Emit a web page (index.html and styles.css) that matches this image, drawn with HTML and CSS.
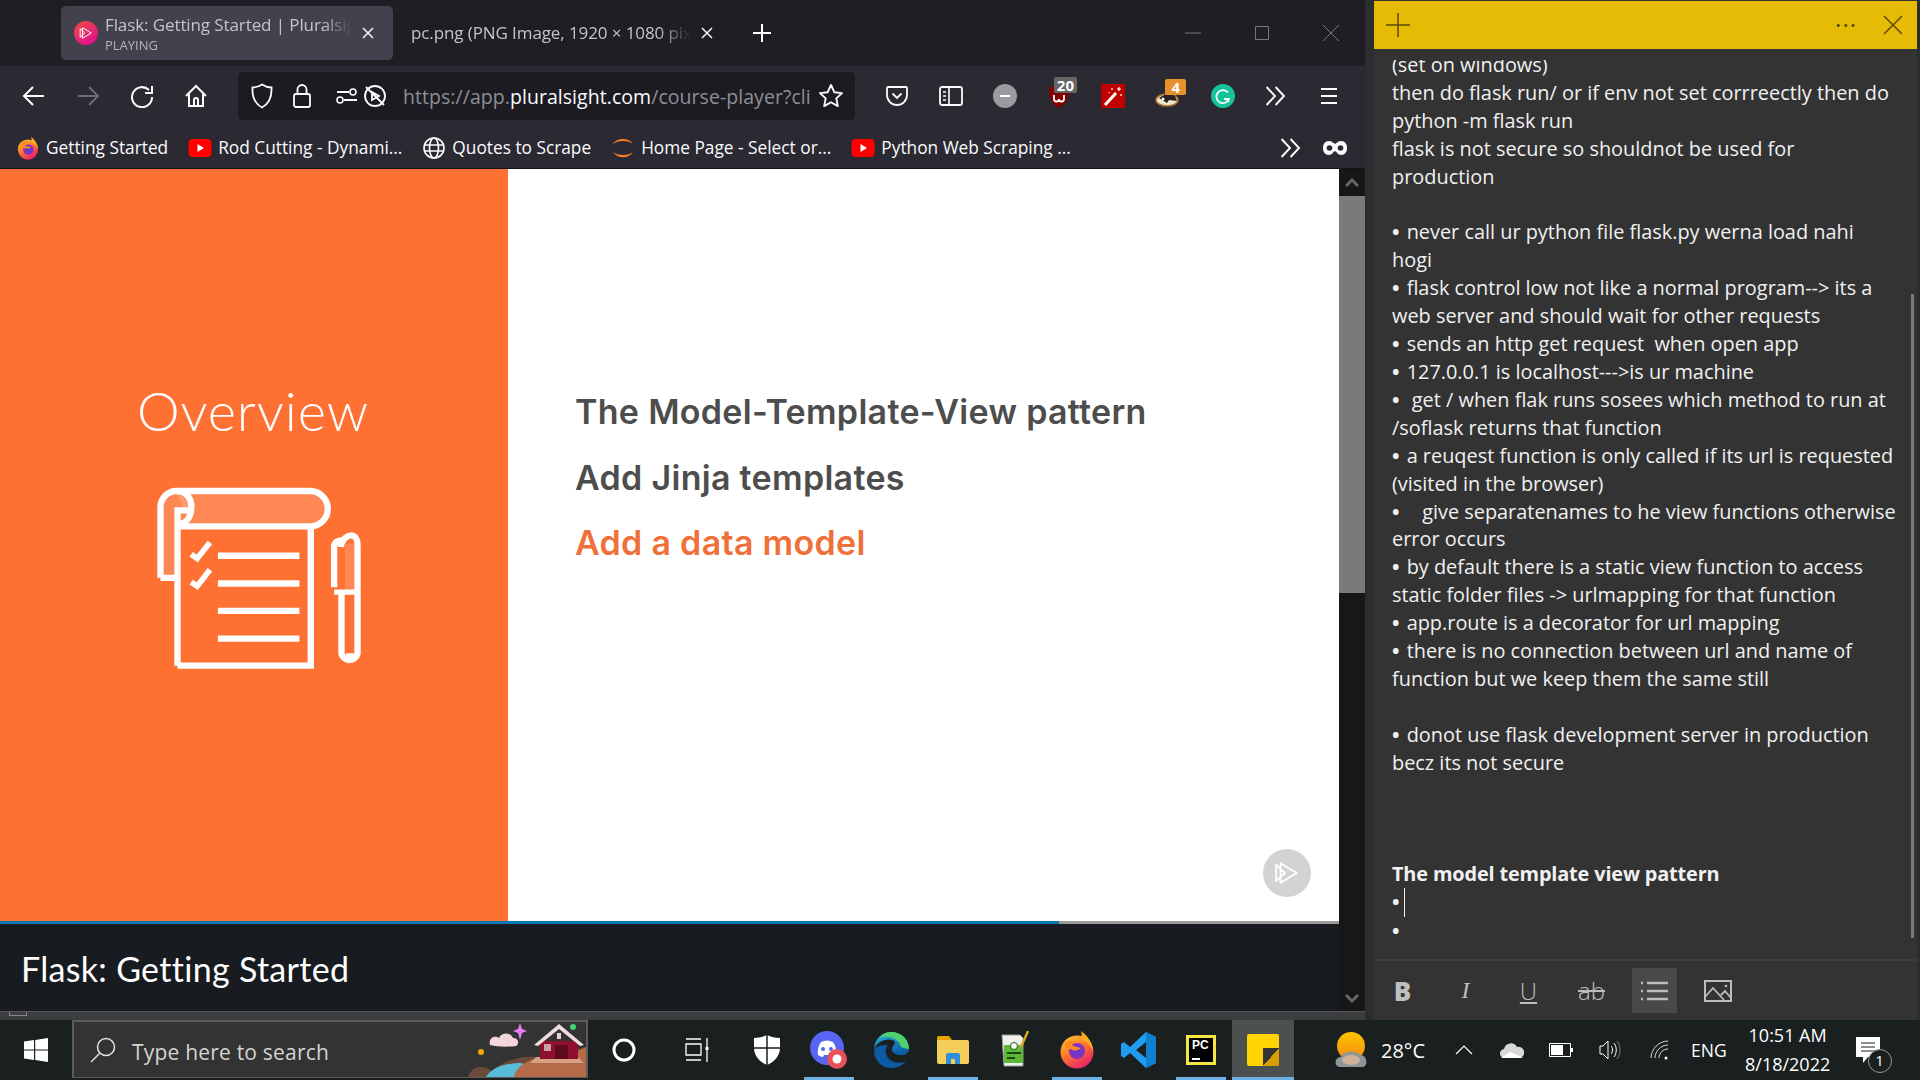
FILE: index.html
```html
<!DOCTYPE html>
<html lang="en">
<head>
  <meta charset="UTF-8">
  <title>Flask: Getting Started | Pluralsight</title>
  <link rel="stylesheet" href="styles.css">
</head>
<body>
  <svg class="defs" width="0" height="0">
    <defs>
      <linearGradient id="foxOuter" x1="0" y1="0" x2="0.6" y2="1">
        <stop offset="0" stop-color="#ffd23a"/><stop offset="0.5" stop-color="#ff7a2a"/><stop offset="1" stop-color="#e8256a"/>
      </linearGradient>
      <radialGradient id="foxInner"><stop offset="0" stop-color="#5a3fd0"/><stop offset="1" stop-color="#8c2fb8"/></radialGradient>
      <linearGradient id="edgeBlue" x1="0" y1="0" x2="0.4" y2="1"><stop offset="0" stop-color="#2fb8d8"/><stop offset="1" stop-color="#0c5fa8"/></linearGradient>
      <linearGradient id="sunFill" x1="0" y1="0" x2="0" y2="1"><stop offset="0" stop-color="#ffc400"/><stop offset="1" stop-color="#f08a10"/></linearGradient>
      <linearGradient id="pinkGrad" x1="0" y1="0" x2="0.6" y2="1"><stop offset="0" stop-color="#f0503c"/><stop offset="1" stop-color="#e0108c"/></linearGradient>
      <symbol id="firefox" viewBox="0 0 32 32">
        <circle cx="16" cy="18" r="13.5" fill="url(#foxOuter)"/>
        <path d="M20 1c5 4 9 9 9 16-3-5-6-8-9-9 1-2 1-5 0-7z" fill="#ffb01f"/>
        <circle cx="16.5" cy="18" r="7" fill="url(#foxInner)"/>
        <path d="M6 10c3-3 7-4 11-2-3 0-5 2-6 4 2 2 7 2 9 3-2 2-5 2-7 1-3 2-7-2-7-6z" fill="#ff8a1f"/>
      </symbol>
      <symbol id="youtube" viewBox="0 0 24 24">
        <rect x="0.5" y="3" width="23" height="18" rx="4" fill="#f00"/>
        <path d="M9.5 8l6.5 4-6.5 4z" fill="#fff"/>
      </symbol>
      <symbol id="chevrons" viewBox="0 0 20 20">
        <path d="M3 2.5l7 7.5-7 7.5M10.5 2.5l7 7.5-7 7.5" fill="none" stroke="currentColor" stroke-width="1.6"/>
      </symbol>
      <symbol id="triangles" viewBox="0 0 24 24">
        <path d="M2 4.5v15l8-7.5zM6 3v18l15-9z" fill="none" stroke="currentColor" stroke-width="1.7" stroke-linejoin="round"/>
      </symbol>
    </defs>
  </svg>

  <div class="desk">
    <div class="browser">
      <div class="tabstrip">
        <div class="tab active">
          <svg class="tab-icon" width="24" height="24" viewBox="0 0 24 24"><circle cx="12" cy="12" r="12" fill="url(#pinkGrad)"/><use href="#triangles" x="5" y="5" width="14" height="14" color="#fff"/></svg>
          <div class="tab-label">
            <div class="tab-title">Flask: Getting Started | Pluralsight</div>
            <div class="tab-sub">PLAYING</div>
          </div>
          <svg class="tab-close" width="12" height="12" viewBox="0 0 12 12"><path d="M1 1l10 10M11 1L1 11" stroke="#f4f4f4" stroke-width="1.5"/></svg>
        </div>
        <div class="tab">
          <div class="tab-label">
            <div class="tab-title">pc.png (PNG Image, 1920 × 1080 pixels)</div>
          </div>
          <svg class="tab-close" width="12" height="12" viewBox="0 0 12 12"><path d="M1 1l10 10M11 1L1 11" stroke="#f4f4f4" stroke-width="1.5"/></svg>
        </div>
        <svg class="new-tab" width="18" height="18" viewBox="0 0 18 18"><path d="M9 0v18M0 9h18" stroke="#fff" stroke-width="2"/></svg>
        <div class="win-controls">
          <svg width="16" height="16" viewBox="0 0 16 16"><path d="M0 8h16" stroke="#777"/></svg>
          <svg width="16" height="16" viewBox="0 0 16 16"><path d="M1.5 1.5h13v13h-13z" fill="none" stroke="#777"/></svg>
          <svg width="16" height="16" viewBox="0 0 16 16"><path d="M0 0l16 16M16 0L0 16" stroke="#777"/></svg>
        </div>
      </div>

      <div class="toolbar">
        <svg class="tool" width="24" height="24" viewBox="0 0 24 24"><path d="M22 12H2M11 3l-9 9 9 9" fill="none" stroke="#fbfbfe" stroke-width="2"/></svg>
        <svg class="tool" width="24" height="24" viewBox="0 0 24 24"><path d="M2 12h20M13 3l9 9-9 9" fill="none" stroke="#6d6c73" stroke-width="2"/></svg>
        <svg class="tool" width="24" height="24" viewBox="0 0 24 24"><path d="M19 6a10 10 0 1 0 3 7" fill="none" stroke="#fbfbfe" stroke-width="2"/><path d="M22 2v7h-7" fill="none" stroke="#fbfbfe" stroke-width="2"/></svg>
        <svg class="tool" width="24" height="24" viewBox="0 0 24 24"><path d="M2 12L12 2l10 10M5 10v12h14V10M10 22v-6a2 2 0 0 1 4 0v6" fill="none" stroke="#fbfbfe" stroke-width="2"/></svg>
        <div class="urlbar">
          <svg width="24" height="26" viewBox="0 0 24 26"><path d="M12 1.5c3 2 6 3 9.500 3 .5 9-2 16-9.500 20C4.500 20.500 2 13.500 2.500 4.500c3.500 0 6.500-1 9.500-3z" fill="none" stroke="#fbfbfe" stroke-width="1.800"/></svg>
          <svg class="lock" width="20" height="26" viewBox="0 0 20 26"><rect x="2" y="11" width="16" height="13" rx="2" fill="none" stroke="#fbfbfe" stroke-width="1.800"/><path d="M5.500 11V6.500a4.500 4.500 0 0 1 9 0V11" fill="none" stroke="#fbfbfe" stroke-width="1.800"/></svg>
          <svg class="perm" width="22" height="20" viewBox="0 0 22 20"><path d="M1 6h12M8 14h13" stroke="#fbfbfe" stroke-width="1.800"/><circle cx="17" cy="6" r="3" fill="none" stroke="#fbfbfe" stroke-width="1.600"/><circle cx="4" cy="14" r="3" fill="none" stroke="#fbfbfe" stroke-width="1.600"/></svg>
          <svg width="24" height="24" viewBox="0 0 24 24"><circle cx="12" cy="12" r="10" fill="none" stroke="#fbfbfe" stroke-width="1.800"/><path d="M9 8v8l7-4zM3 3l18 18" fill="none" stroke="#fbfbfe" stroke-width="1.800"/></svg>
          <div class="url"><span class="dim">https://app.</span>pluralsight.com<span class="dim">/course-player?cli</span></div>
          <svg class="star" width="26" height="26" viewBox="0 0 26 26"><path d="M13 2l3.300 7.200 7.700.9-5.700 5.300 1.500 7.700-6.800-3.900-6.800 3.900 1.500-7.700L2 10.100l7.700-.9z" fill="none" stroke="#fbfbfe" stroke-width="1.900" stroke-linejoin="round"/></svg>
        </div>
        <div class="ext-row">
          <svg width="24" height="24" viewBox="0 0 24 24"><path d="M3 3h18a1 1 0 0 1 1 1v7a10 10 0 0 1-20 0V4a1 1 0 0 1 1-1z" fill="none" stroke="#fbfbfe" stroke-width="1.800"/><path d="M7.500 9.500L12 14l4.500-4.500" fill="none" stroke="#fbfbfe" stroke-width="1.800"/></svg>
          <svg width="24" height="24" viewBox="0 0 24 24"><rect x="1" y="3" width="22" height="18" rx="2" fill="none" stroke="#fbfbfe" stroke-width="1.800"/><path d="M10 3v18M4 8h3M4 12h3M4 16h3" fill="none" stroke="#fbfbfe" stroke-width="1.600"/></svg>
          <svg width="24" height="24" viewBox="0 0 24 24"><circle cx="12" cy="12" r="12" fill="#9a9aa0"/><path d="M7 12h10" stroke="#fff" stroke-width="2"/></svg>
          <div class="ext">
            <svg width="24" height="26" viewBox="0 0 24 26"><path d="M12 1c3 2 6 3 10 3 .5 10-2 17-10 21C4 21 1.500 14 2 4c4 0 7-1 10-3z" fill="#800000"/><path d="M7 12v4a2 2 0 0 0 5 0 2 2 0 0 0 5 0v-4" fill="none" stroke="#fff" stroke-width="1.800"/></svg>
            <span class="badge badge-gray">20</span>
          </div>
          <svg width="24" height="24" viewBox="0 0 24 24"><rect width="24" height="24" fill="#c00000"/><path d="M4 21L15 9" stroke="#fff" stroke-width="3"/><path d="M18 3v4M16 5h4M20 10v2M11 4v2M8 8v1" stroke="#fff" stroke-width="1.200"/></svg>
          <div class="ext">
            <svg width="26" height="24" viewBox="0 0 26 24"><ellipse cx="12" cy="16" rx="11" ry="6" fill="#f2e6d0" stroke="#a8702a" stroke-width="1.500"/><path d="M4 14c5-4 10-5 16-2l2 5-8-1-2 3z" fill="#2a2520"/><circle cx="8" cy="15" r="1.500" fill="#fff"/></svg>
            <span class="badge badge-orange">4</span>
          </div>
          <svg width="24" height="24" viewBox="0 0 24 24"><circle cx="12" cy="12" r="12" fill="#15c39a"/><path d="M17 8.500a6.500 6.500 0 1 0 1 6.500h-5" fill="none" stroke="#fff" stroke-width="1.800"/><path d="M15.500 15l2.500 3" stroke="#fff" stroke-width="1.800"/></svg>
          <svg class="chev" width="24" height="24" color="#fbfbfe"><use href="#chevrons"/></svg>
          <svg width="24" height="24" viewBox="0 0 24 24"><path d="M4 5h16M4 12h16M4 19h16" stroke="#fbfbfe" stroke-width="2"/></svg>
        </div>
      </div>

      <div class="bookmarks">
        <div class="bm"><svg width="24" height="24"><use href="#firefox"/></svg><span>Getting Started</span></div>
        <div class="bm"><svg width="24" height="24"><use href="#youtube"/></svg><span>Rod Cutting - Dynami...</span></div>
        <div class="bm"><svg width="24" height="24" viewBox="0 0 24 24"><circle cx="12" cy="12" r="10" fill="none" stroke="#fbfbfe" stroke-width="1.600"/><ellipse cx="12" cy="12" rx="4.500" ry="10" fill="none" stroke="#fbfbfe" stroke-width="1.600"/><path d="M2 9h20M2 15h20" stroke="#fbfbfe" stroke-width="1.600"/></svg><span>Quotes to Scrape</span></div>
        <div class="bm"><svg width="24" height="28" viewBox="0 0 24 28"><path d="M2 10C5 4 18 3 22 10C18 6 6 6 2 10zM2 18c4 7 16 7 20 0-4 4-16 4-20 0z" fill="#f58025"/></svg><span>Home Page - Select or...</span></div>
        <div class="bm"><svg width="24" height="24"><use href="#youtube"/></svg><span>Python Web Scraping ...</span></div>
        <svg class="bm-more" width="24" height="24" color="#fbfbfe"><use href="#chevrons"/></svg>
        <svg class="bm-mask" width="26" height="18" viewBox="0 0 26 18"><path d="M7 2c3 0 4 2 6 3 2-1 3-3 6-3 4 0 6 3 6 7s-2 7-6 7c-3 0-4-3-6-4-2 1-3 4-6 4-4 0-6-3-6-7s2-7 6-7z" fill="#fbfbfe"/><circle cx="7.500" cy="9" r="2.800" fill="#2b2a33"/><circle cx="18.500" cy="9" r="2.800" fill="#2b2a33"/></svg>
      </div>

      <div class="viewport">
        <div class="page">
          <div class="slide">
            <div class="slide-side">
              <div class="slide-heading">Overview</div>
              <svg class="slide-icon" width="204" height="182" viewBox="170 350 610 545">
                <g fill="none" stroke="#fff" stroke-width="19">
                  <path d="M275 468H628A54 54 0 0 0 628 362H225" fill="rgba(255,255,255,.16)" stroke="none"/>
                  <path d="M180 622V410A48 48 0 0 1 228 362H628A53 53 0 0 1 628 468H240" />
                  <path d="M180 622V410A48 48 0 0 1 228 362C262 362 275 390 272 415C270 440 258 460 235 462V622Z" fill="rgba(255,255,255,.16)" stroke="none"/>
                  <path d="M228 362C262 362 275 390 272 415C270 440 258 460 235 462"/>
                  <path d="M180 622H230M231 885V420H262M231 885H630V468"/>
                  <path d="M352 556H596M352 639H596M352 721H596M352 804H596"/>
                  <path d="M272 552L290 564L328 516M272 635L290 647L328 598" stroke-width="17"/>
                  <path d="M700 650V530C700 515 712 510 722 510" />
                  <path d="M720 530C722 505 742 495 750 495C762 495 770 505 770 522V850A25 25 0 0 1 722 850V665" />
                  <path d="M732 520H760V660H732Z" fill="rgba(255,255,255,.16)" stroke="none"/>
                  <path d="M700 665H770M735 856H760" stroke-width="16"/>
                </g>
              </svg>
            </div>
            <ul class="slide-list">
              <li>The Model-Template-View pattern</li>
              <li>Add Jinja templates</li>
              <li class="current">Add a data model</li>
            </ul>
            <div class="play-btn"><svg width="26" height="26" color="#fff"><use href="#triangles"/></svg></div>
          </div>
          <div class="progress"><div class="progress-done"></div></div>
          <div class="course-title">Flask: Getting Started</div>
        </div>
        <div class="page-scroll">
          <div class="arrow"><svg width="14" height="10" viewBox="0 0 14 10"><path d="M1 8l6-6 6 6" fill="none" stroke="#666" stroke-width="3"/></svg></div>
          <div class="thumb"></div>
          <div class="track"></div>
          <div class="arrow"><svg width="14" height="10" viewBox="0 0 14 10"><path d="M1 2l6 6 6-6" fill="none" stroke="#666" stroke-width="3"/></svg></div>
        </div>
      </div>
      <div class="behind"><div class="behind-mark"></div></div>
    </div>

    <div class="note">
      <div class="note-head">
        <svg width="24" height="24" viewBox="0 0 24 24"><path d="M12 0v24M0 12h24" stroke="#5c4a00" stroke-width="1.500"/></svg>
        <div class="note-dots">···</div>
        <svg width="20" height="20" viewBox="0 0 20 20"><path d="M1 1l18 18M19 1L1 19" stroke="#5c4a00" stroke-width="1.500"/></svg>
      </div>
      <div class="note-body">
        <div class="note-text">
          <div>(set on windows)</div>
          <div>then do flask run/ or if env not set corrreectly then do</div>
          <div>python -m flask run</div>
          <div>flask is not secure so shouldnot be used for</div>
          <div>production</div>
          <div>&nbsp;</div>
          <div><b class="dot">•</b> never call ur python file flask.py werna load nahi</div>
          <div>hogi</div>
          <div><b class="dot">•</b> flask control low not like a normal program--&gt; its a</div>
          <div>web server and should wait for other requests</div>
          <div><b class="dot">•</b> sends an http get request  when open app</div>
          <div><b class="dot">•</b> 127.0.0.1 is localhost---&gt;is ur machine</div>
          <div><b class="dot">•</b>  get / when flak runs sosees which method to run at</div>
          <div>/soflask returns that function</div>
          <div><b class="dot">•</b> a reuqest function is only called if its url is requested</div>
          <div>(visited in the browser)</div>
          <div><b class="dot">•</b>    give separatenames to he view functions otherwise</div>
          <div>error occurs</div>
          <div><b class="dot">•</b> by default there is a static view function to access</div>
          <div>static folder files -&gt; urlmapping for that function</div>
          <div><b class="dot">•</b> app.route is a decorator for url mapping</div>
          <div><b class="dot">•</b> there is no connection between url and name of</div>
          <div>function but we keep them the same still</div>
          <div>&nbsp;</div>
          <div><b class="dot">•</b> donot use flask development server in production</div>
          <div>becz its not secure</div>
          <div>&nbsp;</div>
          <div>&nbsp;</div>
          <div>&nbsp;</div>
          <div class="note-bold">The model template view pattern</div>
          <div><b class="dot">•</b><span class="caret"></span></div>
          <div><b class="dot">•</b></div>
        </div>
        <div class="note-scroll"></div>
      </div>
      <div class="note-tools">
        <div class="fmt fmt-b">B</div>
        <div class="fmt fmt-i">I</div>
        <div class="fmt fmt-u">U</div>
        <div class="fmt fmt-s">ab</div>
        <div class="fmt fmt-on"><svg width="28" height="20" viewBox="0 0 28 20"><path d="M6 2h21M6 10h21M6 18h21" stroke="#bdbdbd" stroke-width="2.400"/><path d="M0 2h3M0 10h3M0 18h3" stroke="#bdbdbd" stroke-width="2.400" stroke-dasharray="2 1"/></svg></div>
        <div class="fmt"><svg width="28" height="22" viewBox="0 0 28 22"><path d="M1 1h26v20H1z" fill="none" stroke="#bdbdbd" stroke-width="2"/><path d="M1 17l8-9 11 12M17 15l4-4 6 7" fill="none" stroke="#bdbdbd" stroke-width="1.800"/><circle cx="22" cy="6" r="1.300" fill="#bdbdbd"/></svg></div>
      </div>
    </div>
  </div>

  <div class="taskbar">
    <div class="start">
      <svg width="24" height="24" viewBox="0 0 24 24"><path d="M0 3.500l10-1.400V11.400H0zM11.200 1.900L24 0V11.400H11.200zM0 12.600h10v9.400L0 20.500zM11.200 12.600H24V24l-12.800-1.900z" fill="#fff"/></svg>
    </div>
    <div class="search">
      <svg width="26" height="26" viewBox="0 0 26 26"><circle cx="16" cy="10" r="8.500" fill="none" stroke="#e4e4e4" stroke-width="1.500"/><path d="M10 16L1 25" stroke="#e4e4e4" stroke-width="1.500"/></svg>
      <span class="search-text">Type here to search</span>
      <svg class="search-art" width="118" height="54" viewBox="0 0 118 54">
        <path d="M0 54c4-12 16-12 24-6 8-8 26-16 46-14l48-10v30z" fill="#6a4a3a"/>
        <path d="M18 54c6-10 20-14 36-14l10 14z" fill="#58bcd8"/>
        <path d="M46 54c2-10 14-18 28-20 16-2 30-2 44-10v30z" fill="#b56a48"/>
        <path d="M62 40h54l-6-6H68z" fill="#d8a184"/>
        <path d="M72 36V18h38v18z" fill="#8f1030"/>
        <path d="M66 22L91 1l25 21-4 1-21-17-21 17z" fill="#f0dcdc"/>
        <rect x="87" y="22" width="13" height="14" fill="#5c0a1c"/>
        <rect x="76" y="21" width="7" height="7" fill="#c9a0a8"/>
        <rect x="89" y="10" width="4" height="6" fill="#e8cfd3"/>
        <path d="M22 22c-2-8 6-10 9-7 2-6 12-6 14 0 5-1 7 6 3 8-8 1-18 1-26-1z" fill="#f2d6da"/>
        <path d="M52 0l2 6 5 2-5 2-2 7-2-7-5-2 5-2z" fill="#e87cf5"/>
        <circle cx="13" cy="29" r="3" fill="#f5a800"/>
        <circle cx="105" cy="4" r="3" fill="#3ed474"/>
      </svg>
    </div>
    <div class="tb-slot tb-cortana"><svg width="24" height="24" viewBox="0 0 24 24"><circle cx="12" cy="12" r="10" fill="none" stroke="#fff" stroke-width="3"/></svg></div>
    <div class="tb-slot tb-tasks"><svg width="24" height="24" viewBox="0 0 24 24"><path d="M1 1h15M1 6h15v11H1zM1 22h15" fill="none" stroke="#fff" stroke-width="1.300"/><path d="M22 0v24" stroke="#fff" stroke-width="1.300"/><rect x="20.500" y="9" width="3" height="3" fill="#fff"/></svg></div>
    <div class="tb-slot"><svg width="26" height="30" viewBox="0 0 26 30"><path d="M13 0c4 2 8 3 13 3v10c0 8-6 14-13 17C6 27 0 21 0 13V3c5 0 9-1 13-3z" fill="#fff"/><path d="M13 0v30M0 13h26" stroke="#1a1f1f" stroke-width="1.500"/></svg></div>
    <div class="tb-slot on"><svg width="38" height="38" viewBox="0 0 38 38"><circle cx="17" cy="17" r="17" fill="#5865f2"/><path d="M8 24c-1-5 1-10 3-13 4-2 8-2 12 0 2 3 4 8 3 13-2 1-3 2-5 2l-1-2h-6l-1 2c-2 0-3-1-5-2z" fill="#fff"/><circle cx="13" cy="18" r="2" fill="#5865f2"/><circle cx="21" cy="18" r="2" fill="#5865f2"/><circle cx="27" cy="28" r="10" fill="#e8505b"/><circle cx="27" cy="28" r="4.500" fill="#fff"/></svg></div>
    <div class="tb-slot"><svg width="36" height="36" viewBox="0 0 36 36"><path d="M1 18C1 7 9 0 18 0c10 0 18 7 18 17 0 4-4 6-8 6-5 0-9-2-9-6 0-3 3-4 3-7C20 6 5 6 1 18z" fill="url(#edgeBlue)"/><path d="M36 17c0-10-8-17-18-17-5 0-9 2-12 6 8-4 20 0 22 9 3 1 6 2 8 2z" fill="#4fd06a"/><path d="M1 18c0 10 7 18 17 18 6 0 11-2 15-7-6 3-14 2-18-3-3-5-3-9 0-13C8 13 3 14 1 18z" fill="#0c59a4"/></svg></div>
    <div class="tb-slot on"><svg width="32" height="28" viewBox="0 0 32 28"><path d="M0 2a2 2 0 0 1 2-2h10l3 4H0z" fill="#e8a400"/><path d="M0 4h30a2 2 0 0 1 2 2v20a2 2 0 0 1-2 2H2a2 2 0 0 1-2-2z" fill="#f6cf5b"/><path d="M9 28V19a2 2 0 0 1 2-2h10a2 2 0 0 1 2 2v9h-5v-5h-4v5z" fill="#2f8fd8"/></svg></div>
    <div class="tb-slot"><svg width="28" height="38" viewBox="0 0 28 38"><path d="M1 4h18l3 3v28H3z" fill="#eef2ea" stroke="#9a9a9a"/><path d="M3 14h19v18H3z" fill="#5fb73a"/><circle cx="13" cy="15" r="3.500" fill="#fff" stroke="#1f5a10"/><path d="M6 22h14M6 27h8" stroke="#174a0c" stroke-width="2"/><path d="M27 0L20 16" stroke="#e0a420" stroke-width="2.400"/></svg></div>
    <div class="tb-slot on"><svg width="36" height="38" viewBox="0 0 36 38"><circle cx="18" cy="21" r="16.500" fill="url(#foxOuter)"/><path d="M22 0c7 5 12 12 12 20-3-6-8-11-13-12 2-3 2-5 1-8z" fill="#ffab1f"/><circle cx="18" cy="20" r="8" fill="url(#foxInner)"/><path d="M6 12c4-3 8-3 12-2-3 1-5 3-5 4 3 2 7 2 9 3-3 3-8 3-10 1-3 1-6-2-6-6z" fill="#ff8a1f"/></svg></div>
    <div class="tb-slot"><svg width="36" height="36" viewBox="0 0 36 36"><path d="M25 0l10 5v26l-10 5-16-15-6 5-3-2V12l3-2 6 5zM25 10L15 18l10 8z" fill="#1f9cf0"/><path d="M25 0l10 5v26l-10 5z" fill="#0f7fd0"/></svg></div>
    <div class="tb-slot on"><div class="pycharm"><div class="pc-inner">PC<i></i></div></div></div>
    <div class="tb-slot tb-sticky on"><div class="sticky"><i></i></div></div>

    <div class="tray">
      <svg class="tray-weather" width="32" height="36" viewBox="0 0 32 36"><circle cx="16" cy="14" r="14" fill="url(#sunFill)"/><path d="M5 35c-6 0-6-10 1-10 2-6 15-7 19-2 7-1 9 12 2 12z" fill="#8c9598"/><ellipse cx="16" cy="28" rx="9" ry="5" fill="#d0b09a"/></svg>
      <span class="temp">28°C</span>
      <svg class="tray-caret" width="18" height="10" viewBox="0 0 18 10"><path d="M1 9l8-8 8 8" fill="none" stroke="#fff" stroke-width="1.200"/></svg>
      <svg class="tray-cloud" width="24" height="18" viewBox="0 0 24 18"><path d="M5 17a4.500 4.500 0 0 1-1-9 7 7 0 0 1 13-2 5.500 5.500 0 0 1 3 11z" fill="#d8d8d8"/><path d="M1 17l9-6 5 2 8 4z" fill="#fff"/></svg>
      <svg class="tray-batt" width="24" height="14" viewBox="0 0 24 14"><path d="M.5.5h21v13H.5z" fill="none" stroke="#fff"/><rect x="2" y="2" width="12" height="10" fill="#fff"/><rect x="22" y="5" width="2" height="4" fill="#fff"/></svg>
      <svg class="tray-sound" width="22" height="20" viewBox="0 0 22 20"><path d="M1 6h3l5-5v18l-5-5H1z" fill="none" stroke="#fff"/><path d="M12 6c2 2 2 6 0 8M15 3c3 4 3 10 0 14" fill="none" stroke="#fff"/><path d="M18 1c4 5 4 13 0 18" fill="none" stroke="#777"/></svg>
      <svg class="tray-wifi" width="20" height="20" viewBox="0 0 20 20"><path d="M1 18C1 9 9 1 18 1M5 18c0-7 6-13 13-13M9 18c0-5 4-9 9-9" fill="none" stroke="#ddd"/><circle cx="16" cy="18" r="1.500" fill="#fff"/></svg>
      <span class="lang">ENG</span>
      <div class="clock"><div>10:51 AM</div><div>8/18/2022</div></div>
      <div class="notify">
        <svg width="24" height="26" viewBox="0 0 24 26"><path d="M0 0h24v20H12l-5 6v-6H0z" fill="#fff"/><path d="M5 6h14M5 10h14M5 14h14" stroke="#1a1f1f"/></svg>
        <span class="notify-count">1</span>
      </div>
    </div>
  </div>
</body>
</html>
```
FILE: styles.css
```css
* {
  box-sizing: border-box;
}
body {
  margin: 0;
  width: 1920px;
  height: 1080px;
  overflow: hidden;
  background-color: #2b2d2e;
  font-family: "Open Sans", "Liberation Sans", sans-serif;
  color: #fbfbfe;
}
svg {
  display: block;
  flex: none;
}
.defs {
  position: absolute;
}
.desk {
  display: flex;
  height: 1020px;
}

/* browser window */
.browser {
  width: 1365px;
  display: flex;
  flex-direction: column;
}
.tabstrip {
  height: 66px;
  background-color: #1f1e25;
  display: flex;
  align-items: center;
  padding-left: 61px;
}
.tab {
  width: 332px;
  height: 54px;
  display: flex;
  align-items: center;
  border-radius: 5px;
  padding: 0 19px 0 13px;
}
.tab.active {
  background-color: #42414d;
}
.tab + .tab {
  width: 332px;
  padding-left: 18px;
  padding-right: 0;
}
.tab-icon {
  margin-right: 7px;
}
.tab-label {
  min-width: 0;
  overflow: hidden;
  white-space: nowrap;
  -webkit-mask-image: linear-gradient(to right, #000 88%, transparent);
  mask-image: linear-gradient(to right, #000 88%, transparent);
}
.tab.active .tab-label {
  width: 254px;
}
.tab + .tab .tab-label {
  width: 280px;
}
.tab-title {
  font-size: 17px;
  line-height: 24px;
  color: #c4c4ca;
  letter-spacing: -0.1px;
}
.tab-sub {
  font-size: 13px;
  line-height: 17px;
  color: #b4b4ba;
}
.tab-close {
  margin-left: 10px;
}
.new-tab {
  margin-left: 28px;
}
.win-controls {
  margin-left: auto;
  display: flex;
  gap: 53px;
  padding-right: 26px;
}
.toolbar {
  height: 58px;
  background-color: #2b2a33;
  display: flex;
  align-items: center;
  padding: 1px 0 0 22px;
}
.tool {
  margin-right: 30px;
}
.urlbar {
  width: 617px;
  height: 48px;
  background-color: #1c1b22;
  border-radius: 5px;
  display: flex;
  align-items: center;
  padding-left: 12px;
  gap: 12px;
}
.lock {
  margin-left: 6px;
}
.perm {
  margin-left: 12px;
  margin-right: -7px;
}
.url {
  font-size: 19.5px;
  white-space: nowrap;
  width: 408px;
  overflow: hidden;
  margin: 2px 0 0 4px;
  letter-spacing: 0.05px;
  color: #fbfbfe;
}
.url .dim {
  color: #8f8f96;
}
.star {
  margin-left: -5px;
}
.ext-row {
  display: flex;
  align-items: center;
  gap: 30px;
  margin-left: 30px;
}
.ext {
  position: relative;
}
.badge {
  position: absolute;
  top: -6px;
  right: -6px;
  height: 16px;
  font-size: 15px;
  line-height: 16px;
  font-weight: 700;
  color: #fff;
  padding: 0 3px;
  border-radius: 2px;
}
.badge-gray {
  background-color: #666;
}
.badge-orange {
  background-color: #e8902a;
  top: -5px;
  right: -5px;
  padding: 0 6px;
}
.chev {
  margin-left: -2px;
}
.bookmarks {
  height: 45px;
  background-color: #2b2a33;
  border-bottom: 1px solid #111;
  display: flex;
  align-items: center;
  padding: 3px 0 0 16px;
  gap: 20px;
}
.bm {
  display: flex;
  align-items: center;
  gap: 6px;
  font-size: 17.3px;
  white-space: nowrap;
}
.bm-more {
  margin-left: auto;
}
.bm-mask {
  margin-right: 17px;
}

/* page */
.viewport {
  flex: 1;
  display: flex;
  min-height: 0;
}
.page {
  width: 1339px;
  display: flex;
  flex-direction: column;
}
.slide {
  height: 752px;
  display: flex;
  position: relative;
  background-color: #fff;
}
.slide-side {
  width: 508px;
  background-color: #ff7033;
  padding: 212px 0 0 0;
}
.slide-heading {
  font-family: Lato, sans-serif;
  font-weight: 300;
  font-size: 54px;
  line-height: 60px;
  letter-spacing: 0.9px;
  color: #fff;
  margin-left: 137px;
}
.slide-icon {
  margin: 46px 0 0 157px;
}
.slide-list {
  list-style: none;
  margin: 0;
  padding: 210px 0 0 67px;
  font-family: Inter, sans-serif;
  font-weight: 600;
  font-size: 34px;
  line-height: 65.5px;
  letter-spacing: 0.3px;
  color: #4d4d4d;
  white-space: nowrap;
}
.slide-list .current {
  color: #f0703a;
}
.play-btn {
  position: absolute;
  right: 28px;
  bottom: 24px;
  width: 48px;
  height: 48px;
  border-radius: 50%;
  background-color: #d3d3d3;
  display: flex;
  align-items: center;
  justify-content: center;
}
.progress {
  height: 3px;
  background-color: #9a9a9a;
}
.progress-done {
  width: 1059px;
  height: 3px;
  background-color: #0a78b0;
}
.course-title {
  flex: 1;
  background-color: #181b20;
  font-family: Lato, sans-serif;
  font-size: 34px;
  letter-spacing: 0.3px;
  padding: 24px 0 0 21px;
  color: #fff;
}
.page-scroll {
  width: 26px;
  display: flex;
  flex-direction: column;
  background-color: #171717;
}
.page-scroll .arrow {
  height: 27px;
  display: flex;
  align-items: center;
  justify-content: center;
}
.page-scroll .thumb {
  height: 397px;
  background-color: #7a7a7a;
}
.page-scroll .track {
  flex: 1;
}
.behind {
  height: 9px;
  background-color: #3c3d3e;
  border-top: 1px solid #555;
  padding-left: 9px;
}
.behind-mark {
  width: 18px;
  height: 4px;
  border: 1px solid #888;
  border-top: 0;
}

/* sticky note */
.note {
  width: 543px;
  margin-left: 9px;
  padding-top: 1px;
  background-color: #333;
  display: flex;
  flex-direction: column;
}
.note-head {
  height: 48px;
  background-color: #e5bb05;
  display: flex;
  align-items: center;
  padding: 0 14px 0 12px;
}
.note-dots {
  margin-left: auto;
  margin-right: 26px;
  font-size: 24px;
  line-height: 24px;
  color: #5c4a00;
  letter-spacing: 1px;
}
.note-body {
  flex: 1;
  min-height: 0;
  margin-top: 11px;
  overflow: hidden;
  position: relative;
  border-bottom: 2px solid #3e3e3e;
}
.note-text {
  margin-top: -9px;
  padding-left: 18px;
  font-size: 19.9px;
  line-height: 27.9px;
  color: #f1f1f1;
}
.note-text div {
  white-space: pre;
}
.note-text .dot {
  font-weight: 700;
  margin-right: 2px;
}
.note-bold {
  font-weight: 700;
  letter-spacing: -0.15px;
}
.caret {
  display: inline-block;
  width: 1px;
  height: 29px;
  margin-left: 3px;
  vertical-align: -8px;
  background-color: #eee;
}
.note-scroll {
  position: absolute;
  right: 3px;
  top: 234px;
  bottom: 21px;
  width: 3px;
  background-color: #7a7a7a;
}
.note-tools {
  height: 59px;
  display: flex;
  padding: 7px 0 0 6px;
  gap: 18px;
}
.fmt {
  width: 45px;
  height: 45px;
  display: flex;
  align-items: center;
  justify-content: center;
  font-size: 24px;
  color: #bdbdbd;
}
.fmt-b {
  font-weight: 800;
  font-size: 26px;
}
.fmt-i {
  font-family: "Liberation Serif", serif;
  font-style: italic;
}
.fmt-u {
  text-decoration: underline;
  font-weight: 300;
}
.fmt-s {
  text-decoration: line-through;
  font-weight: 300;
}
.fmt-on {
  background-color: #494949;
}

/* taskbar */
.taskbar {
  height: 60px;
  background-color: #1a1f1f;
  display: flex;
  align-items: stretch;
}
.start {
  width: 72px;
  display: flex;
  align-items: center;
  justify-content: center;
}
.search {
  width: 516px;
  height: 58px;
  background-color: #333;
  border: 2px solid #5c5c5c;
  border-bottom-width: 1px;
  display: flex;
  align-items: center;
  padding-left: 16px;
  position: relative;
  overflow: hidden;
}
.search-text {
  margin: 4px 0 0 16px;
  font-size: 21px;
  color: #d4d4d4;
  letter-spacing: 0.2px;
}
.search-art {
  position: absolute;
  right: 0;
  bottom: 0;
}
.tb-slot {
  width: 62px;
  display: flex;
  align-items: center;
  justify-content: center;
  position: relative;
}
.tb-cortana {
  margin-left: 5px;
  margin-right: 11px;
}
.tb-tasks {
  margin-right: 8px;
}
.tb-slot.on::after {
  content: "";
  position: absolute;
  left: 6px;
  right: 6px;
  bottom: 0;
  height: 3px;
  background-color: #6cb0e4;
}
.tb-sticky {
  background-color: #4c504f;
}
.tb-sticky.on::after {
  left: 0;
  right: 0;
}
.pycharm {
  width: 30px;
  height: 30px;
  padding: 3px;
  background-color: #f5e640;
}
.pc-inner {
  width: 24px;
  height: 24px;
  background-color: #000;
  color: #fff;
  font-family: "Liberation Sans", sans-serif;
  font-size: 12px;
  font-weight: 700;
  line-height: 14px;
  padding-left: 3px;
  position: relative;
}
.pc-inner i {
  position: absolute;
  left: 3px;
  bottom: 2px;
  width: 8px;
  height: 2px;
  background-color: #fff;
}
.sticky {
  width: 32px;
  height: 32px;
  background-color: #ffd400;
  border-radius: 2px;
  position: relative;
  overflow: hidden;
}
.sticky i {
  position: absolute;
  right: 0;
  bottom: 0;
  width: 16px;
  height: 18px;
  background: linear-gradient(to bottom right, transparent 50%, #d99e00 50%), linear-gradient(to bottom right, #333 50%, transparent 50%);
}
.tray {
  flex: 1;
  display: flex;
  align-items: center;
  color: #fff;
  font-size: 18px;
  position: relative;
}
.tray-weather {
  margin-left: 41px;
}
.temp {
  margin-left: 14px;
  font-size: 20px;
  width: 45px;
  white-space: nowrap;
}
.tray-caret {
  margin-left: 29px;
}
.tray-cloud {
  margin-left: 27px;
}
.tray-batt {
  margin-left: 25px;
}
.tray-sound {
  margin-left: 26px;
}
.tray-wifi {
  margin-left: 29px;
}
.lang {
  margin-left: 21px;
  font-size: 17.5px;
}
.clock {
  margin-left: 18px;
  width: 86px;
  text-align: center;
  font-size: 18px;
  line-height: 29px;
  white-space: nowrap;
}
.notify {
  margin-left: 25px;
  position: relative;
}
.notify-count {
  position: absolute;
  left: 12px;
  top: 12px;
  width: 24px;
  height: 24px;
  border-radius: 50%;
  background-color: #1a1f1f;
  border: 1px solid #999;
  text-align: center;
  font-size: 15px;
  line-height: 21px;
}
```
